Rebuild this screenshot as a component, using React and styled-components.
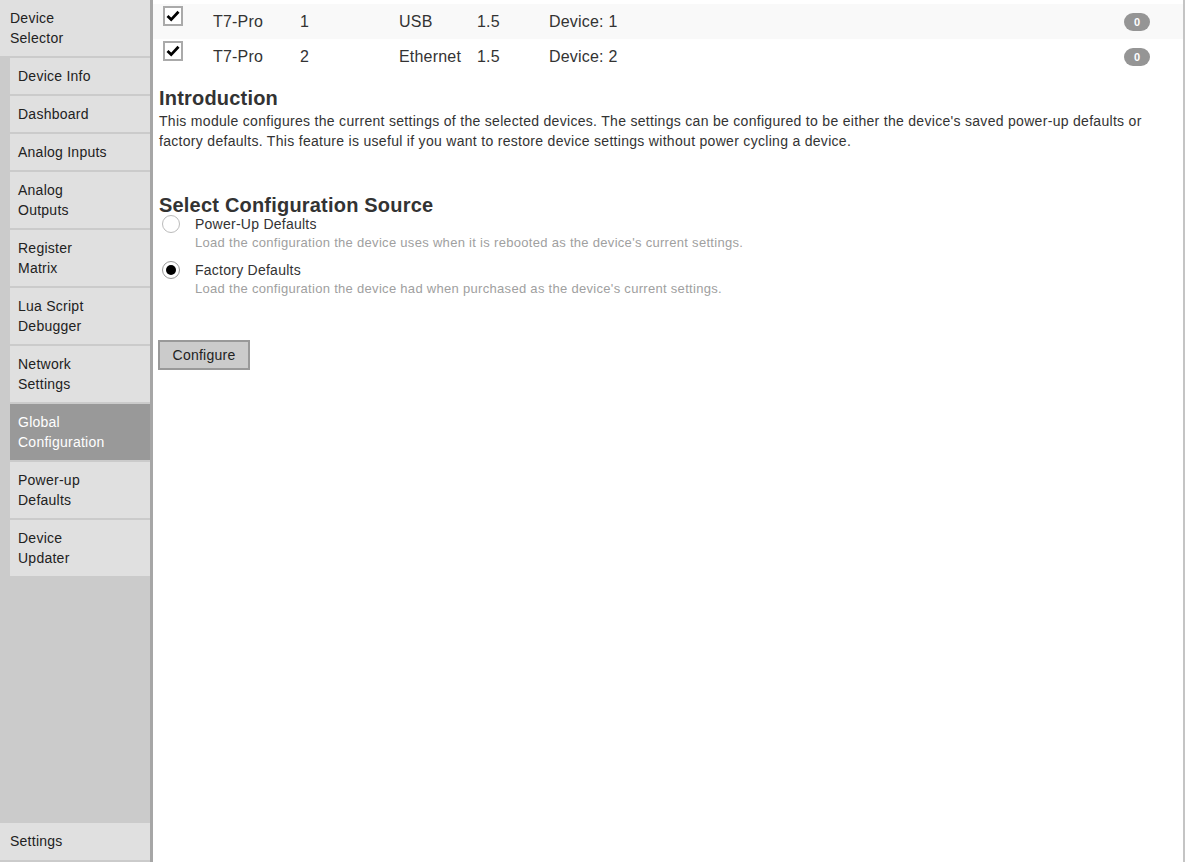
import React from 'react';
import styled, { createGlobalStyle } from 'styled-components';

const GlobalStyle = createGlobalStyle`
  html, body, #root {
    height: 100%;
  }
  body {
    margin: 0;
    font-family: "Liberation Sans", Arial, sans-serif;
    letter-spacing: 0.25px;
    color: #333;
    background: #fff;
  }
`;

// Общий каркас: боковое меню + рабочая область
const Page = styled.div`
  display: flex;
  height: 862px;
  overflow: hidden;
`;

const Sidebar = styled.nav`
  display: flex;
  flex-direction: column;
  width: 150px;
  flex-shrink: 0;
  background-color: #cbcbcb;
  border-right: 3px solid #a6a6a6;
`;

const NavTop = styled.div`
  background-color: #e0e0e0;
  padding: 8px 10px;
  margin-bottom: 2px;
  font-size: 14px;
  line-height: 20px;
  color: #222;
`;

const NavList = styled.div`
  display: flex;
  flex-direction: column;
  gap: 2px;
  padding-left: 10px;
`;

const NavItem = styled.div`
  background-color: ${(p) => (p.$active ? '#999' : '#e0e0e0')};
  color: ${(p) => (p.$active ? '#fff' : '#222')};
  padding: 8px 8px;
  font-size: 14px;
  line-height: 20px;
`;

const Spacer = styled.div`
  flex: 1;
`;

const NavBottom = styled(NavTop)`
  margin-bottom: 2px;
  padding-bottom: 9px;
`;

const Main = styled.main`
  flex: 1;
  border-right: 2px solid #c4c4c4;
  overflow: hidden;
`;

// Таблица выбранных устройств
const DeviceTable = styled.div`
  margin-top: 4px;
`;

const DeviceRow = styled.div`
  display: grid;
  grid-template-columns: 50px 87px 99px 78px 72px 1fr auto;
  align-items: center;
  height: 35px;
  padding: 0 33px 0 10px;
  background-color: ${(p) => (p.$striped ? '#f9f9f9' : '#fff')};
  font-size: 16px;
  letter-spacing: 0.2px;
  color: #333;
`;

const CheckBox = styled.span`
  align-self: start;
  margin-top: 2px;
  display: flex;
  align-items: center;
  justify-content: center;
  width: 16px;
  height: 16px;
  border: 2px solid #aaa;
  background: #fff;
`;

const Badge = styled.span`
  display: inline-flex;
  align-items: center;
  justify-content: center;
  width: 26px;
  height: 18px;
  border-radius: 9px;
  background-color: #959595;
  color: #fff;
  font-size: 11px;
  font-weight: bold;
  letter-spacing: 0;
`;

const Content = styled.div`
  padding: 0 6px;
`;

const Heading = styled.h2`
  margin: ${(p) => p.$top}px 0 0;
  font-size: 20px;
  line-height: 19px;
  font-weight: bold;
  letter-spacing: 0.2px;
  color: #333;
`;

const Paragraph = styled.p`
  margin: 3px 0 0;
  font-size: 14px;
  line-height: 20px;
  letter-spacing: 0.3px;
  color: #333;
`;

const RadioGroup = styled.div`
  display: flex;
  flex-direction: column;
  gap: 8px;
`;

const RadioOption = styled.label`
  display: grid;
  grid-template-columns: 36px 1fr;
  position: relative;
`;

const RadioMark = styled.span`
  position: absolute;
  left: 3px;
  top: 0;
  width: 16px;
  height: 16px;
  border-radius: 50%;
  border: 1px solid ${(p) => (p.$checked ? '#999' : '#bbb')};
  background: #fff;
  display: flex;
  align-items: center;
  justify-content: center;

  &::after {
    content: '';
    display: ${(p) => (p.$checked ? 'block' : 'none')};
    width: 10px;
    height: 10px;
    border-radius: 50%;
    background: #000;
  }
`;

const OptionText = styled.div`
  grid-column: 2;
`;

const OptionLabel = styled.div`
  font-size: 14px;
  line-height: 18px;
  color: #333;
`;

const OptionHint = styled.div`
  font-size: 13px;
  line-height: 20px;
  letter-spacing: 0.3px;
  color: #a0a0a0;
`;

const ConfigureButton = styled.button`
  margin: 41px 0 0 -1px;
  width: 92px;
  height: 30px;
  background-color: #cbcbcb;
  border: 2px solid #999;
  font-family: inherit;
  font-size: 14px;
  letter-spacing: 0.25px;
  color: #222;
  padding: 0;
`;

const NAV_ITEMS = [
  ['Device Info'],
  ['Dashboard'],
  ['Analog Inputs'],
  ['Analog', 'Outputs'],
  ['Register', 'Matrix'],
  ['Lua Script', 'Debugger'],
  ['Network', 'Settings'],
  ['Global', 'Configuration'],
  ['Power-up', 'Defaults'],
  ['Device', 'Updater'],
];

const DEVICES = [
  { model: 'T7-Pro', id: 1, conn: 'USB', fw: '1.5', name: 'Device: 1' },
  { model: 'T7-Pro', id: 2, conn: 'Ethernet', fw: '1.5', name: 'Device: 2' },
];

const SOURCES = [
  {
    label: 'Power-Up Defaults',
    hint: "Load the configuration the device uses when it is rebooted as the device's current settings.",
  },
  {
    label: 'Factory Defaults',
    hint: "Load the configuration the device had when purchased as the device's current settings.",
  },
];

const CheckIcon = () => (
  <svg width="14" height="12" viewBox="0 0 14 12">
    <polyline points="1.5,6 5.2,9.6 12.5,1.8" fill="none" stroke="#000" strokeWidth="2.8" />
  </svg>
);

const App = () => {
  const selected = 1;
  const activeItem = 'Global Configuration';

  return (
    <>
      <GlobalStyle />
      <Page>
        <Sidebar>
          <NavTop>Device<br />Selector</NavTop>
          <NavList>
            {NAV_ITEMS.map((lines) => {
              const key = lines.join(' ');
              return (
                <NavItem key={key} $active={key === activeItem}>
                  {lines.map((line, i) => (
                    <React.Fragment key={line}>
                      {i > 0 && <br />}
                      {line}
                    </React.Fragment>
                  ))}
                </NavItem>
              );
            })}
          </NavList>
          <Spacer />
          <NavBottom>Settings</NavBottom>
        </Sidebar>

        <Main>
          <DeviceTable>
            {DEVICES.map((d, i) => (
              <DeviceRow key={d.id} $striped={i === 0}>
                <CheckBox><CheckIcon /></CheckBox>
                <span>{d.model}</span>
                <span>{d.id}</span>
                <span>{d.conn}</span>
                <span>{d.fw}</span>
                <span>{d.name}</span>
                <Badge>0</Badge>
              </DeviceRow>
            ))}
          </DeviceTable>

          <Content>
            <Heading $top={15}>Introduction</Heading>
            <Paragraph>
              This module configures the current settings of the selected devices. The settings can be configured to be either the device's saved power-up defaults or factory defaults. This feature is useful if you want to restore device settings without power cycling a device.
            </Paragraph>

            <Heading $top={45}>Select Configuration Source</Heading>
            <RadioGroup>
              {SOURCES.map((s, i) => (
                <RadioOption key={s.label}>
                  <RadioMark $checked={i === selected} />
                  <OptionText>
                    <OptionLabel>{s.label}</OptionLabel>
                    <OptionHint>{s.hint}</OptionHint>
                  </OptionText>
                </RadioOption>
              ))}
            </RadioGroup>

            <ConfigureButton>Configure</ConfigureButton>
          </Content>
        </Main>
      </Page>
    </>
  );
};

export default App;
